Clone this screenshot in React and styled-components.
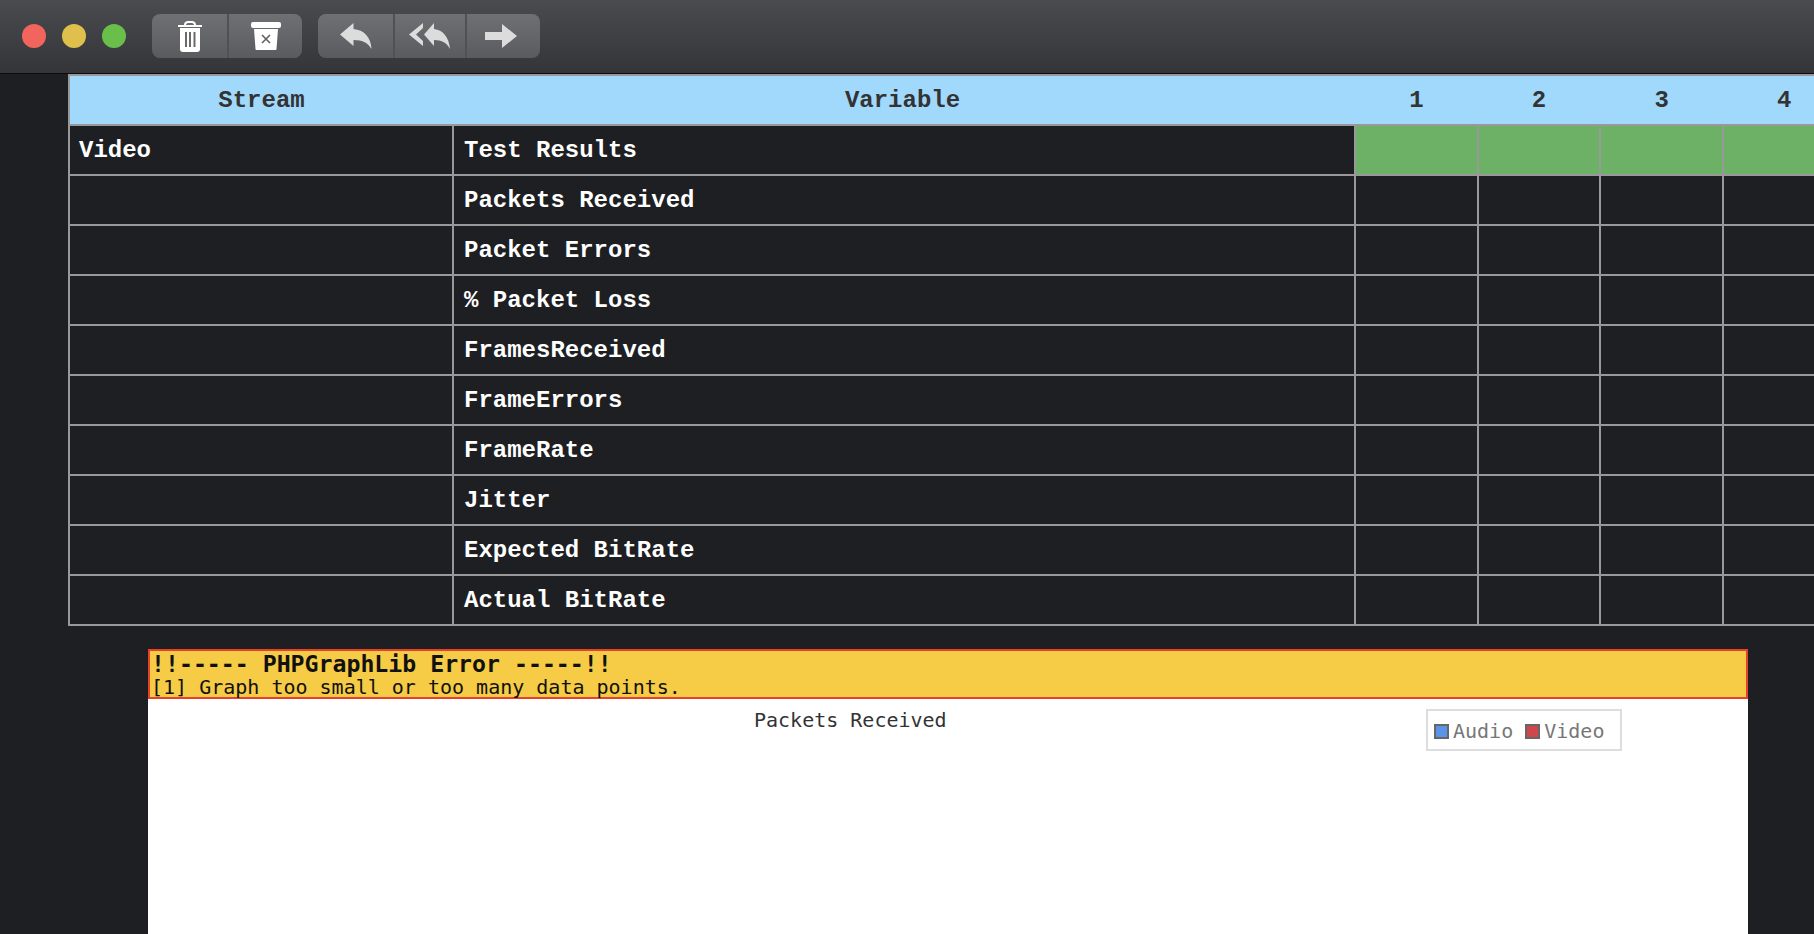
import React from 'react';
import styled, { createGlobalStyle } from 'styled-components';

const GlobalStyle = createGlobalStyle`
  html, body {
    margin: 0;
    padding: 0;
    height: 100%;
    overflow: hidden;
    background: #1e1f23;
  }
`;

const Window = styled.div`
  width: 1814px;
  height: 934px;
  overflow: hidden;
  background: #1e1f23;
`;

const Toolbar = styled.div`
  display: flex;
  align-items: center;
  box-sizing: border-box;
  height: 74px;
  padding: 0 0 1px 22px;
  background: linear-gradient(#4a4b4f, #343538);
  border-bottom: 1px solid #0c0c0e;
`;

const Light = styled.span`
  width: 24px;
  height: 24px;
  margin-right: 16px;
  border-radius: 50%;
  background: ${(p) => p.$color};
`;

const ButtonGroup = styled.div`
  display: flex;
  height: 44px;
  margin-left: ${(p) => p.$gap}px;
  border-radius: 8px;
  overflow: hidden;
  background: linear-gradient(#6f7073, #5a5b5e);
`;

const ToolButton = styled.div`
  display: flex;
  align-items: center;
  justify-content: center;
  box-sizing: border-box;
  width: ${(p) => p.$width}px;
  height: 100%;
  padding-right: ${(p) => p.$nudge || 0}px;
  & + & {
    border-left: 2px solid #505154;
  }
`;

const Table = styled.table`
  table-layout: fixed;
  width: 1776.700px;
  margin-left: 68px;
  border-collapse: collapse;
  font-family: "Liberation Mono", "Courier New", monospace;
  font-size: 24px;
  font-weight: 700;
`;

const HeadCell = styled.th`
  height: 48px;
  padding: 0 ${(p) => p.$nudge || 0}px 0 0;
  background: #a1d9fc;
  color: #333;
  text-align: center;
  border-top: 2px solid #999;
  border-bottom: 2px solid #999;
  &:first-child {
    border-left: 2px solid #999;
  }
`;

const Cell = styled.td`
  height: 48px;
  padding: 0 0 0 ${(p) => p.$inset || 9}px;
  color: #fff;
  background: ${(p) => (p.$pass ? '#6cb166' : '#1e1f23')};
  border: 2px solid #999;
`;

const Graph = styled.div`
  box-sizing: border-box;
  width: 1600px;
  height: 290px;
  margin: 23px 0 0 148px;
  background: #fff;
  font-family: "DejaVu Sans Mono", monospace;
`;

const ErrorBox = styled.div`
  box-sizing: border-box;
  height: 50px;
  padding: 0 1px;
  background: #f6cb45;
  border: 2px solid #e8412b;
  color: #111;
`;

const ErrorTitle = styled.div`
  font-size: 23.200px;
  line-height: 25px;
  font-weight: 700;
`;

const ErrorText = styled.div`
  margin-top: 1px;
  font-size: 20px;
  line-height: 20px;
`;

const GraphHead = styled.div`
  display: flex;
  align-items: flex-start;
  padding: 10px 0 0 606px;
`;

const GraphTitle = styled.div`
  width: 672px;
  font-size: 20px;
  line-height: 22px;
  color: #333;
`;

const Legend = styled.div`
  display: flex;
  align-items: center;
  box-sizing: border-box;
  width: 196px;
  height: 42px;
  padding: 2px 0 0 6px;
  border: 2px solid #ddd;
  font-size: 20px;
  color: #777;
`;

const Swatch = styled.span`
  box-sizing: border-box;
  width: 15px;
  height: 15px;
  margin: 0 4px 0 ${(p) => p.$gap}px;
  background: ${(p) => p.$color};
  border: 2px solid #666;
`;

const TrashIcon = () => (
  <svg width="26" height="32" viewBox="0 0 26 32">
    <path fill="#fff" d="M7 5C7 2 9 1 11 1h4c2 0 4 1 4 4h6v2H1V5zM9 5h8c0-1-1-2-2-2h-4c-1 0-2 1-2 2z" />
    <path fill="#fff" d="M3 8h20v21c0 2-1 3-3 3H6c-2 0-3-1-3-3z" />
    <path fill="#6a6a6a" d="M8 12h2v15H8zM12 12h2v15h-2zM16.500 12h2v15h-2z" />
  </svg>
);

const ArchiveIcon = () => (
  <svg width="30" height="28" viewBox="0 0 30 28">
    <rect fill="#fff" x="0" y="0" width="30" height="6" rx="2" />
    <path fill="#fff" d="M3 7h24l-1.500 20c0 .6-.5 1-1 1H5.500c-.5 0-1-.4-1-1z" />
    <path stroke="#5f6062" strokeWidth="1.600" fill="none" d="M11 13l8 8M19 13l-8 8" />
  </svg>
);

const ReplyIcon = () => (
  <svg width="32" height="26" viewBox="0 0 32 26">
    <path fill="#dcdcdc" d="M0 11.500L13.500 0v6C24 7 31 14 31.500 26 28 20 23 17 13.500 17v6z" />
  </svg>
);

const ReplyAllIcon = () => (
  <svg width="42" height="26" viewBox="0 0 42 26">
    <path fill="#dcdcdc" d="M0 11.500L14 0v5L7 11.500 14 18v5z" />
    <path fill="#dcdcdc" d="M15 11.500L25 0v6c9 1 15 8 16 20-3-6-8-9-16-9v6z" />
  </svg>
);

const ForwardIcon = () => (
  <svg width="32" height="24" viewBox="0 0 32 24">
    <path fill="#dcdcdc" d="M0 8h17V0l15 12-15 12v-8H0z" />
  </svg>
);

const variables = [
  'Test Results',
  'Packets Received',
  'Packet Errors',
  '% Packet Loss',
  'FramesReceived',
  'FrameErrors',
  'FrameRate',
  'Jitter',
  'Expected BitRate',
  'Actual BitRate',
];

const runs = [1, 2, 3, 4];

function App() {
  return (
    <Window>
      <GlobalStyle />
      <Toolbar>
        <Light $color="#f2655c" />
        <Light $color="#e0c04c" />
        <Light $color="#6abf4b" />
        <ButtonGroup $gap={10}>
          <ToolButton $width={75}><TrashIcon /></ToolButton>
          <ToolButton $width={75}><ArchiveIcon /></ToolButton>
        </ButtonGroup>
        <ButtonGroup $gap={16}>
          <ToolButton $width={75}><ReplyIcon /></ToolButton>
          <ToolButton $width={72}><ReplyAllIcon /></ToolButton>
          <ToolButton $width={75} $nudge={6}><ForwardIcon /></ToolButton>
        </ButtonGroup>
      </Toolbar>
      <Table>
        <colgroup>
          <col style={{ width: 384 }} />
          <col style={{ width: 902 }} />
          {runs.map((r) => <col key={r} style={{ width: 122.67 }} />)}
        </colgroup>
        <thead>
          <tr>
            <HeadCell>Stream</HeadCell>
            <HeadCell $nudge={3}>Variable</HeadCell>
            {runs.map((r) => <HeadCell key={r}>{r}</HeadCell>)}
          </tr>
        </thead>
        <tbody>
          {variables.map((name, i) => (
            <tr key={name}>
              <Cell>{i === 0 ? 'Video' : ''}</Cell>
              <Cell $inset={10}>{name}</Cell>
              {runs.map((r) => <Cell key={r} $pass={i === 0} />)}
            </tr>
          ))}
        </tbody>
      </Table>
      <Graph>
        <ErrorBox>
          <ErrorTitle>!!----- PHPGraphLib Error -----!!</ErrorTitle>
          <ErrorText>[1] Graph too small or too many data points.</ErrorText>
        </ErrorBox>
        <GraphHead>
          <GraphTitle>Packets Received</GraphTitle>
          <Legend>
            <Swatch $color="#5b93e6" $gap={0} />
            Audio
            <Swatch $color="#cf474c" $gap={12} />
            Video
          </Legend>
        </GraphHead>
      </Graph>
    </Window>
  );
}

export default App;
